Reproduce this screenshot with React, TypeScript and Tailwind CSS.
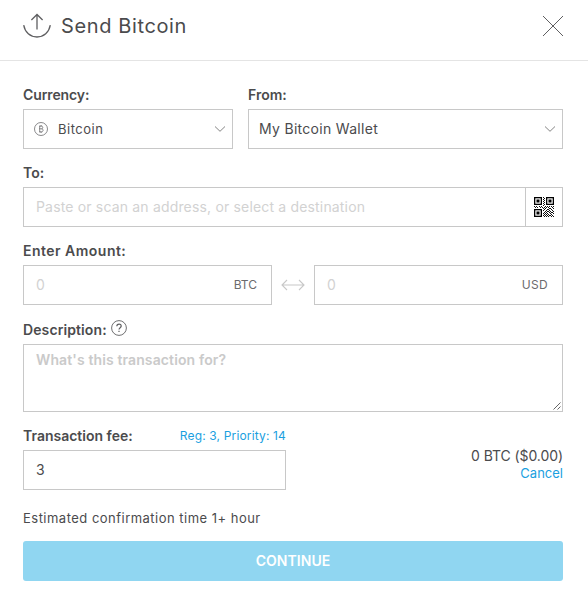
import React from "react";

const line = "border border-[#c8c8c8]";

function Label({ children }: { children: React.ReactNode }) {
  return (
    <div className="flex h-[38px] items-start pt-[14px] text-[14px] font-semibold leading-[20px] text-[#4b4b4d]">
      {children}
    </div>
  );
}

function Chevron() {
  return (
    <svg width="12" height="8" viewBox="0 0 12 8" fill="none" stroke="#777" strokeWidth="0.9">
      <path d="M1 1.5 L6 6.3 L11 1.5" />
    </svg>
  );
}

function Finder({ x, y }: { x: number; y: number }) {
  return (
    <g>
      <rect x={x + 0.65} y={y + 0.65} width="6.7" height="6.7" fill="none" stroke="#000" strokeWidth="1.3" />
      <rect x={x + 2.5} y={y + 2.5} width="3" height="3" fill="#000" />
    </g>
  );
}

const modules = [
  "9,0", "10,1", "9,2", "10,3", "9,4", "10,5", "9,6", "10,7", "9,8",
  "0,9", "2,9", "3,10", "5,9", "6,10", "7,9", "1,10", "8,10",
  "11,9", "13,9", "15,9", "17,9", "19,9", "10,10", "12,10", "14,10", "18,10",
  "9,11", "11,11", "15,11", "16,11", "19,11", "10,12", "13,12", "14,12", "17,12",
  "9,13", "12,13", "15,13", "18,13", "11,14", "13,14", "14,14", "16,14", "19,14",
  "10,15", "12,15", "15,15", "17,15", "18,15", "9,16", "11,16", "13,16", "16,16", "19,16",
  "10,17", "12,17", "14,17", "17,17", "9,18", "11,18", "13,18", "15,18", "16,18", "18,18",
  "10,19", "12,19", "14,19", "17,19", "19,19",
];

function QrCode() {
  return (
    <svg width="20" height="20" viewBox="0 0 20 20">
      <Finder x={0} y={0} />
      <Finder x={12} y={0} />
      <Finder x={0} y={12} />
      {modules.map((m) => {
        const [x, y] = m.split(",");
        return <rect key={m} x={x} y={y} width="1" height="1" fill="#111" />;
      })}
    </svg>
  );
}

export default function App() {
  return (
    <main className="h-[595px] w-[588px] bg-white font-['Inter','Liberation_Sans',sans-serif] text-[#4b4b4d]">
      <header className="flex h-[61px] items-start justify-between border-b border-[#e4e4e4] pl-[23px] pr-[25px]">
        <div className="flex items-start">
          <svg className="mt-[13px]" width="28" height="26" viewBox="0 0 28 26" fill="none" stroke="#5f5f61" strokeWidth="1.3">
            <path d="M0.7 12.2 C2 19.5 7.2 24 14 24 S26 19.5 27.3 12.2" />
            <path d="M14 16.5 V1.8 M8.4 7 L14 1.5 L19.6 7" />
          </svg>
          <h1 className="ml-[10px] mt-[12px] text-[20px] leading-[28px] tracking-[0.62px]">Send Bitcoin</h1>
        </div>
        <svg className="mt-[16px]" width="20" height="20" viewBox="0 0 20 20" fill="none" stroke="#5f5f61" strokeWidth="1">
          <path d="M0 0 L20 20 M20 0 L0 20" />
        </svg>
      </header>

      <form className="px-[23px] pr-[25px] pt-[10px] pb-[14px]">
        <div className="flex gap-[15px]">
          <div className="w-[210px]">
            <Label><span className="tracking-[-0.1px]">Currency:</span></Label>
            <div className={`flex h-10 items-center pl-[10px] pr-[6px] ${line}`}>
              <svg width="14" height="14" viewBox="0 0 14 14" fill="none" stroke="#6b6b6d" strokeWidth="0.8">
                <circle cx="7" cy="7" r="6.5" />
                <path d="M5.2 4.2 H7.5 C9.2 4.2 9.2 6.8 7.5 6.8 H5.2 M7.5 6.8 C9.6 6.8 9.6 9.8 7.5 9.8 H5.2 M5.7 4.2 V9.8 M6.2 3.3 V4.2 M7.6 3.3 V4.2 M6.2 9.8 V10.7 M7.6 9.8 V10.7" />
              </svg>
              <span className="ml-[10px] flex-1 pt-px text-[13px] tracking-[0.5px]">Bitcoin</span>
              <Chevron />
            </div>
          </div>
          <div className="flex-1">
            <Label><span>From:</span></Label>
            <div className={`flex h-10 items-center justify-between pl-[10px] pr-[6px] ${line}`}>
              <span className="pb-[2px] text-[14px] tracking-[0.3px]">My Bitcoin Wallet</span>
              <Chevron />
            </div>
          </div>
        </div>

        <Label><span>To:</span></Label>
        <div className={`flex h-10 ${line}`}>
          <div className="flex flex-1 items-center pb-[2px] pl-3 text-[14px] tracking-[0.17px] text-[#d2d2d2]">
            <span>Paste or scan an address, or select a destination</span>
          </div>
          <div className="flex w-[37px] items-center justify-center border-l border-[#c8c8c8]"><QrCode /></div>
        </div>

        <Label><span className="tracking-[0.48px]">Enter Amount:</span></Label>
        <div className="flex items-center justify-between">
          <div className={`flex h-10 w-[249px] items-center justify-between pl-3 pr-[14px] ${line}`}>
            <span className="pb-[2px] text-[14px] text-[#d2d2d2]">0</span>
            <span className="text-[12px] text-[#6b6b6d]">BTC</span>
          </div>
          <svg width="24" height="12" viewBox="0 0 24 12" fill="none" stroke="#c8c8c8" strokeWidth="1.1">
            <path d="M1 6 H23 M6 1 L1 6 L6 11 M18 1 L23 6 L18 11" />
          </svg>
          <div className={`flex h-10 w-[249px] items-center justify-between pl-3 pr-[14px] ${line}`}>
            <span className="pb-[2px] text-[14px] text-[#d2d2d2]">0</span>
            <span className="text-[12px] tracking-[0.3px] text-[#6b6b6d]">USD</span>
          </div>
        </div>

        <div className="flex h-[39px]">
          <Label><span className="mt-px tracking-[0.1px]">Description:</span></Label>
          <svg className="ml-[4px] mt-[15px]" width="16" height="16" viewBox="0 0 16 16" fill="none" stroke="#5f5f61">
            <circle cx="8" cy="8" r="7.4" strokeWidth="0.9" />
            <path d="M5.8 6.2 C5.8 3.3 10.3 3.4 10.2 6.1 C10.1 7.7 8 7.7 8 9.6 M8 10.8 V12" strokeWidth="1.2" />
          </svg>
        </div>
        <div className={`flex h-[68px] items-end justify-between ${line}`}>
          <span className="self-start pl-3 pt-[5px] text-[14px] font-semibold leading-[20px] tracking-[0.12px] text-[#cacaca]">What's this transaction for?</span>
          <svg className="mb-px mr-px" width="8" height="8" viewBox="0 0 8 8" stroke="#555" strokeWidth="0.9">
            <path d="M0.5 7.5 L7.5 0.5 M4.5 7.5 L7.5 4.5" />
          </svg>
        </div>

        <div className="flex justify-between">
          <div className="w-[263px]">
            <div className="flex justify-between">
              <Label><span>Transaction fee:</span></Label>
              <span className="pt-[14px] text-[12px] leading-[20px] tracking-[0.15px] text-[#1b9fdf]">Reg: 3, Priority: 14</span>
            </div>
            <div className={`flex h-10 items-center pb-[2px] pl-3 text-[14px] ${line}`}>3</div>
          </div>
          <div className="flex flex-col items-end pt-[35px] leading-[18px]">
            <span className="text-[14px] tracking-[-0.08px]">0 BTC ($0.00)</span>
            <span className="-mt-px text-[13px] text-[#1b9fdf]">Cancel</span>
          </div>
        </div>

        <p className="mt-[18px] text-[13px] leading-[20px] tracking-[0.48px]"><span>Estimated confirmation time 1+ hour</span></p>
        <button type="button" className="mt-[13px] block h-10 w-full rounded-[3px] bg-[#90d6f1] pb-px text-[14px] font-semibold tracking-[0.05px] text-white">
          CONTINUE
        </button>
      </form>
    </main>
  );
}
